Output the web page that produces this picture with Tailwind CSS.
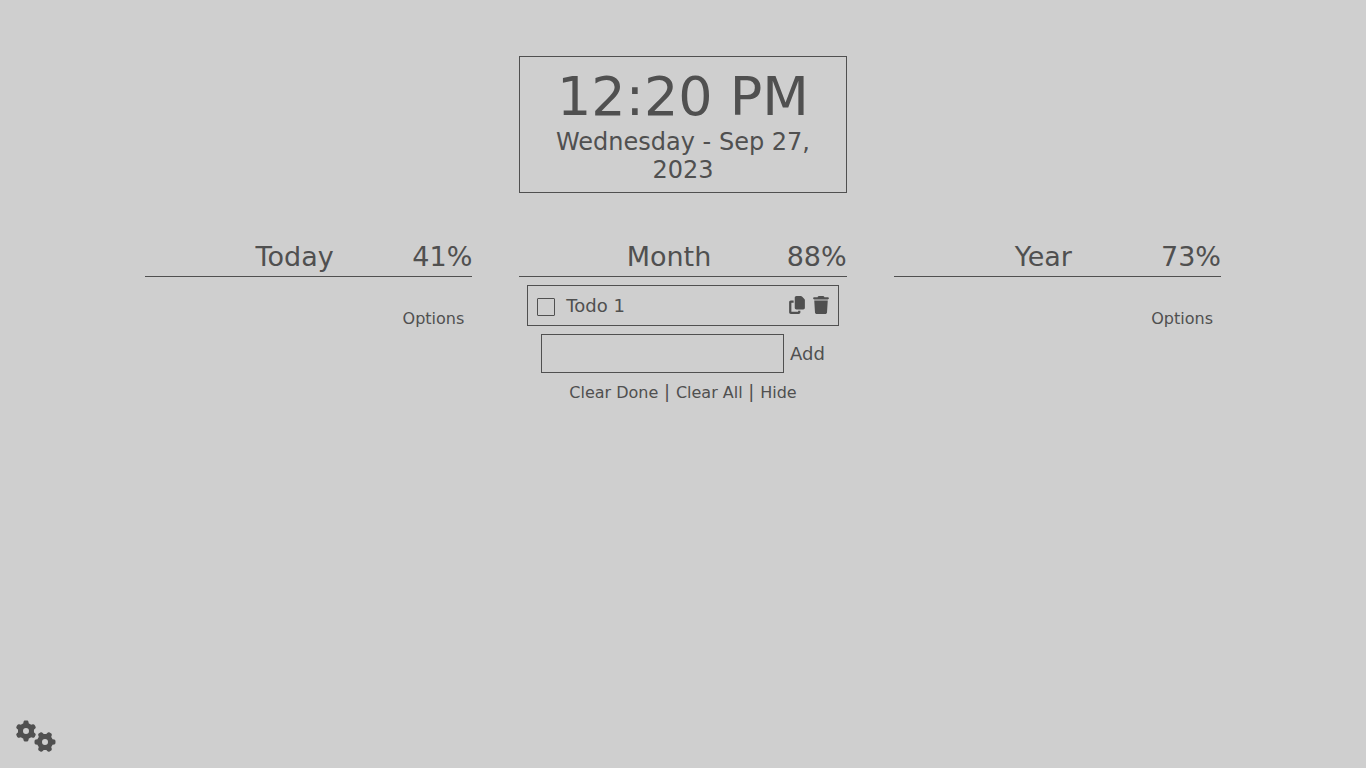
<!DOCTYPE html>
<html lang="en">
<head>
<meta charset="utf-8">
<meta name="viewport" content="width=device-width, initial-scale=1">
<title>Todo</title>
<script src="https://cdn.jsdelivr.net/npm/@tailwindcss/browser@4"></script>
</head>
<body class="flex min-h-screen flex-col bg-[#cfcfcf] font-['DejaVu_Sans',sans-serif] text-lg/[21px] text-[#505050]">
  <main class="mx-auto grid w-full max-w-[1076px] grow grid-cols-3 content-start gap-x-[47px] gap-y-12 pt-14">
    <header class="col-start-2 border border-[#505050] p-2 text-center">
      <h1 class="text-[54px]/[63px]">12:20 PM</h1>
      <p class="text-2xl/7">Wednesday - Sep 27, 2023</p>
    </header>

    <section class="col-start-1">
      <div class="flex border-b border-[#505050] pb-[3px] text-[27px]/[32px]">
        <h2 class="grow pl-8 text-center">Today</h2>
        <span>41%</span>
      </div>
      <div class="mt-8 flex justify-end pr-2 text-base/[19px]">
        <button type="button">Options</button>
      </div>
    </section>

    <section>
      <div class="flex border-b border-[#505050] pb-[3px] text-[27px]/[32px]">
        <h2 class="grow pl-8 text-center">Month</h2>
        <span>88%</span>
      </div>
      <ul class="m-2">
        <li class="flex items-center border border-[#505050] px-[9px] py-[9px]">
          <input id="todo-1" type="checkbox" class="mt-[3px] size-[18px] appearance-none rounded-[1px] border border-[#505050] checked:bg-[#505050]">
          <label for="todo-1" class="grow pl-[11px]">Todo 1</label>
          <div class="flex gap-2 pb-px">
            <button type="button" aria-label="Copy">
              <svg class="h-[18px] w-4" viewBox="0 0 448 512" fill="currentColor"><path d="M208 0H332.1c12.7 0 24.9 5.1 33.9 14.1l67.9 67.9c9 9 14.1 21.2 14.1 33.9V336c0 26.5-21.5 48-48 48H208c-26.5 0-48-21.5-48-48V48c0-26.5 21.5-48 48-48zM48 128h80v64H64V448H256V416h64v48c0 26.5-21.5 48-48 48H48c-26.5 0-48-21.5-48-48V176c0-26.5 21.5-48 48-48z"/></svg>
            </button>
            <button type="button" aria-label="Delete">
              <svg class="h-[18px] w-4" viewBox="0 0 448 512" fill="currentColor"><path d="M135.2 17.7L128 32H32C14.3 32 0 46.3 0 64S14.3 96 32 96H416c17.7 0 32-14.3 32-32s-14.3-32-32-32H320l-7.2-14.3C307.4 6.8 296.3 0 284.2 0H163.8c-12.1 0-23.2 6.8-28.6 17.7zM416 128H32L53.2 467c1.6 25.3 22.6 45 47.9 45H346.9c25.3 0 46.3-19.7 47.9-45L416 128z"/></svg>
            </button>
          </div>
        </li>
      </ul>
      <form class="flex items-center justify-center gap-[6px]">
        <input type="text" aria-label="New todo" class="h-[39px] w-[243px] min-w-0 border border-[#505050] px-2">
        <button type="button">Add</button>
      </form>
      <div class="mt-2 text-center">
        <button type="button" class="text-base/[19px]">Clear Done</button> | <button type="button" class="text-base/[19px]">Clear All</button> | <button type="button" class="text-base/[19px]">Hide</button>
      </div>
    </section>

    <section>
      <div class="flex border-b border-[#505050] pb-[3px] text-[27px]/[32px]">
        <h2 class="grow pl-8 text-center">Year</h2>
        <span>73%</span>
      </div>
      <div class="mt-8 flex justify-end pr-2 text-base/[19px]">
        <button type="button">Options</button>
      </div>
    </section>
  </main>

  <footer class="flex p-4">
    <button type="button" aria-label="Settings">
      <svg class="h-8 w-10" viewBox="0 0 640 512" fill="currentColor"><path d="M308.5 135.3c7.1-6.3 9.9-16.2 6.2-25c-2.3-5.3-4.8-10.5-7.6-15.5L304 89.4c-3-5-6.3-9.9-9.8-14.6c-5.7-7.6-15.7-10.1-24.7-7.1l-28.2 9.3c-10.7-8.8-23-16-36.2-20.9L199 27.1c-1.9-9.3-9.1-16.7-18.5-17.8C173.9 8.4 167.2 8 160.4 8h-.7c-6.8 0-13.5 .4-20.1 1.2c-9.4 1.1-16.6 8.6-18.5 17.8L115 56.1c-13.3 5-25.5 12.1-36.2 20.9L50.5 67.8c-9-3-19-.5-24.7 7.1c-3.5 4.7-6.8 9.6-9.9 14.6l-3 5.3c-2.8 5-5.3 10.2-7.6 15.6c-3.7 8.7-.9 18.6 6.2 25l22.2 19.8C32.6 161.9 32 168.9 32 176s.6 14.1 1.7 20.9L11.5 216.7c-7.1 6.3-9.9 16.2-6.2 25c2.3 5.3 4.8 10.5 7.6 15.6l3 5.2c3 5.1 6.3 9.9 9.9 14.6c5.7 7.6 15.7 10.1 24.7 7.1l28.2-9.3c10.7 8.8 23 16 36.2 20.9l6.1 29.1c1.9 9.3 9.1 16.7 18.5 17.8c6.7 .8 13.5 1.2 20.4 1.2s13.7-.4 20.4-1.2c9.4-1.1 16.6-8.6 18.5-17.8l6.1-29.1c13.3-5 25.5-12.1 36.2-20.9l28.2 9.3c9 3 19 .5 24.7-7.1c3.5-4.7 6.8-9.5 9.8-14.6l3.1-5.4c2.8-5 5.3-10.2 7.6-15.5c3.7-8.7 .9-18.6-6.2-25l-22.2-19.8c1.1-6.8 1.7-13.8 1.7-20.9s-.6-14.1-1.7-20.9l22.2-19.8zM112 176a48 48 0 1 1 96 0 48 48 0 1 1 -96 0zM504.7 500.5c6.3 7.1 16.2 9.9 25 6.2c5.3-2.3 10.5-4.8 15.5-7.6l5.4-3.1c5-3 9.9-6.3 14.6-9.8c7.6-5.7 10.1-15.7 7.1-24.7l-9.3-28.2c8.8-10.7 16-23 20.9-36.2l29.1-6.1c9.3-1.9 16.7-9.1 17.8-18.5c.8-6.7 1.2-13.5 1.2-20.4s-.4-13.7-1.2-20.4c-1.1-9.4-8.6-16.6-17.8-18.5L583.9 307c-5-13.3-12.1-25.5-20.9-36.2l9.3-28.2c3-9 .5-19-7.1-24.7c-4.7-3.5-9.6-6.8-14.6-9.9l-5.3-3c-5-2.8-10.2-5.3-15.6-7.6c-8.7-3.7-18.6-.9-25 6.2l-19.8 22.2c-6.8-1.1-13.8-1.7-20.9-1.7s-14.1 .6-20.9 1.7l-19.8-22.2c-6.3-7.1-16.2-9.9-25-6.2c-5.3 2.3-10.5 4.8-15.6 7.6l-5.2 3c-5.1 3-9.9 6.3-14.6 9.9c-7.6 5.7-10.1 15.7-7.1 24.7l9.3 28.2c-8.8 10.7-16 23-20.9 36.2L315.1 313c-9.3 1.9-16.7 9.1-17.8 18.5c-.8 6.7-1.2 13.5-1.2 20.4s.4 13.7 1.2 20.4c1.1 9.4 8.6 16.6 17.8 18.5l29.1 6.1c5 13.3 12.1 25.5 20.9 36.2l-9.3 28.2c-3 9-.5 19 7.1 24.7c4.7 3.5 9.5 6.8 14.6 9.8l5.4 3.1c5 2.8 10.2 5.3 15.5 7.6c8.7 3.7 18.6 .9 25-6.2l19.8-22.2c6.8 1.1 13.8 1.7 20.9 1.7s14.1-.6 20.9-1.7l19.8 22.2zM464 304a48 48 0 1 1 0 96 48 48 0 1 1 0-96z"/></svg>
    </button>
  </footer>
</body>
</html>
